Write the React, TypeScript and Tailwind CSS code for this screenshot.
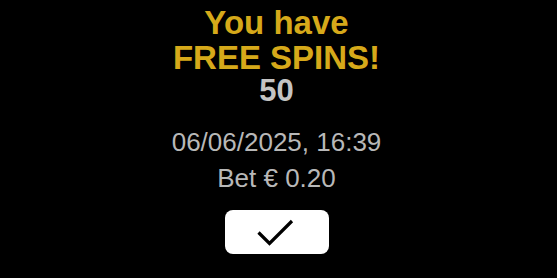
import React from "react";

export default function App() {
  return (
    <div className="w-[557px] h-[278px] bg-black overflow-hidden flex flex-col items-center pr-[4px]" style={{ fontFamily: '"Liberation Sans", Arial, sans-serif' }}>
      <div className="mt-[5px] text-[33px] leading-[35px] font-bold text-[#d6a91a] text-center">
        <div>You have</div>
        <div>FREE SPINS!</div>
      </div>
      <div className="mt-[0px] text-[31px] leading-[31px] font-bold text-[#c4c4c4]">50</div>
      <div className="mt-[21px] text-[26px] leading-[30px] text-[#b8b8b8]">06/06/2025, 16:39</div>
      <div className="mt-[6px] text-[26px] leading-[30px] text-[#b8b8b8]">Bet € 0.20</div>
      <button className="mt-[17px] w-[104px] h-[44px] bg-white rounded-[8px] flex items-center justify-center">
        <svg width="40" height="30" viewBox="0 0 40 30" fill="none">
          <path d="M1.5 15.5 L12.5 26.5 L35 4" stroke="black" strokeWidth="3.2" strokeLinecap="butt" strokeLinejoin="miter" />
        </svg>
      </button>
    </div>
  );
}
